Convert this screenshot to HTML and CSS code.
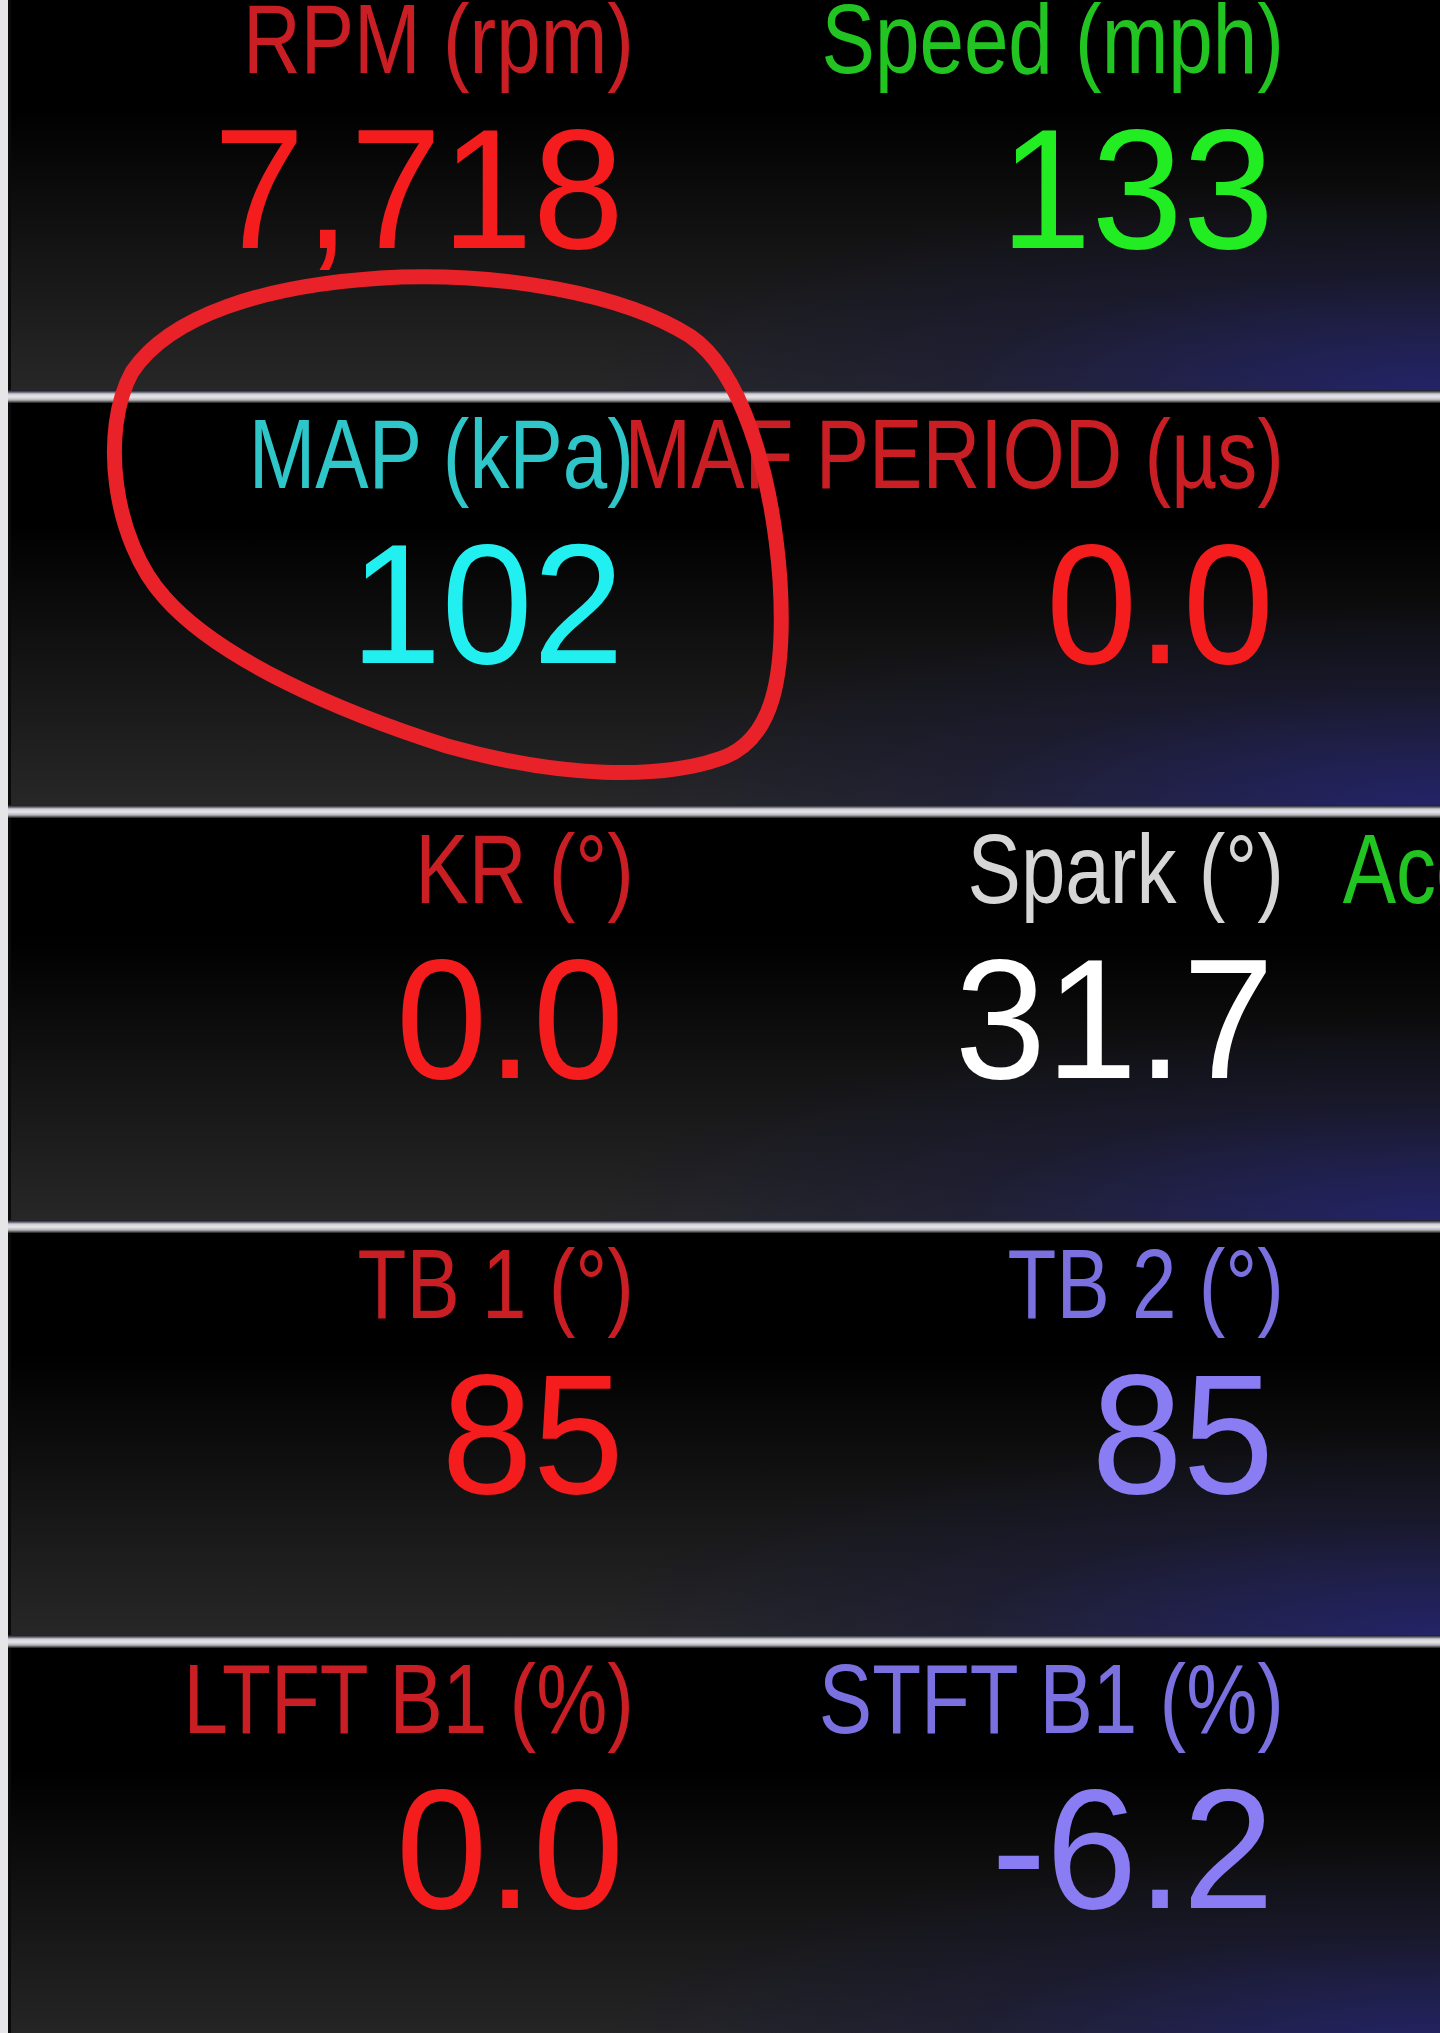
FILE: index.html
```html
<!DOCTYPE html>
<html lang="en">
<head>
  <meta charset="UTF-8" />
  <meta name="viewport" content="width=device-width, initial-scale=1.0"/>
  <title>Gauge Dashboard</title>
  <link rel="stylesheet" href="styles.css">
</head>
<body>

  <div class="screen">
    <!-- Row 1 -->
    <div class="row">
      <div class="cell red">
        <div class="label">RPM (rpm)</div>
        <div class="value">7,718</div>
      </div>
      <div class="cell green">
        <div class="label">Speed (mph)</div>
        <div class="value">133</div>
      </div>
      <div class="cell"></div>
    </div>
    <div class="sep"></div>

    <!-- Row 2 -->
    <div class="row">
      <div class="cell cyan">
        <div class="label">MAP (kPa)</div>
        <div class="value">102</div>
      </div>
      <div class="cell red">
        <div class="label">MAF PERIOD (µs)</div>
        <div class="value">0.0</div>
      </div>
      <div class="cell"></div>
    </div>
    <div class="sep"></div>

    <!-- Row 3 -->
    <div class="row">
      <div class="cell red">
        <div class="label">KR (°)</div>
        <div class="value">0.0</div>
      </div>
      <div class="cell white">
        <div class="label">Spark (°)</div>
        <div class="value">31.7</div>
      </div>
      <div class="cell green">
        <div class="label">Accel. Pedal (%)</div>
        <div class="value">100</div>
      </div>
    </div>
    <div class="sep"></div>

    <!-- Row 4 -->
    <div class="row">
      <div class="cell red">
        <div class="label">TB 1 (°)</div>
        <div class="value">85</div>
      </div>
      <div class="cell purple">
        <div class="label">TB 2 (°)</div>
        <div class="value">85</div>
      </div>
      <div class="cell"></div>
    </div>
    <div class="sep"></div>

    <!-- Row 5 -->
    <div class="row">
      <div class="cell red">
        <div class="label">LTFT B1 (%)</div>
        <div class="value">0.0</div>
      </div>
      <div class="cell purple">
        <div class="label">STFT B1 (%)</div>
        <div class="value">-6.2</div>
      </div>
      <div class="cell"></div>
    </div>
  </div>

  <!-- hand drawn circle around MAP -->
  <svg class="scribble" viewBox="0 0 1440 2033" width="1440" height="2033">
    <path d="M 401 277
             C 500 274, 620 292, 690 336
             C 740 370, 772 470, 780 580
             C 786 680, 772 740, 722 758
             C 660 780, 560 778, 447 746
             C 340 712, 220 660, 165 598
             C 112 540, 100 430, 132 372
             C 168 318, 260 283, 401 277 Z"
          fill="none" stroke="#e82228" stroke-width="15" stroke-linejoin="round" stroke-linecap="round"/>
  </svg>

</body>
</html>
```

FILE: styles.css
```css
body {
  margin: 0;
  padding: 0;
  background: #000;
  font-family: "Liberation Sans", Arial, sans-serif;
  overflow: hidden;
  position: relative;
  height: 2033px;
}

.screen {
  margin-top: -12px;
  border-left: 8px solid #e6e6e8;
  filter: blur(0.6px);
}

.row {
  display: grid;
  grid-template-columns: repeat(3, 650px);
  height: 402px;
  box-sizing: border-box;
  padding-top: 18px;
  border-left: 3px solid #0a0a0a;
  background-color: #000;
  background-image:
    radial-gradient(75% 65% at 100% 100%, rgba(34, 34, 120, 0.8) 0%, rgba(24, 24, 70, 0.4) 45%, rgba(0, 0, 0, 0) 80%),
    linear-gradient(to bottom, #000 30%, #141414 65%, #272727 100%);
}

.sep {
  height: 13px;
  background: linear-gradient(to bottom, #101020 0, #5a5a64 2px, #cfcfd6 4px, #e6e6ea 7px, #b4b4ba 10px, #1a1a1a 13px);
}

.cell {
  display: flex;
  flex-direction: column;
  align-items: flex-end;
  padding-right: 27px;
  white-space: nowrap;
}

.label {
  font-size: 80px;
  line-height: 80px;
  height: 80px;
  transform: scaleY(1.22);
  transform-origin: 50% 85%;
}

.value {
  font-size: 164px;
  line-height: 164px;
  height: 164px;
  margin-top: 24px;
  margin-right: 10px;
  transform: scaleY(1.04);
  transform-origin: 50% 85%;
}

.red .label { color: #c81e24; }
.red .value { color: #f41c1c; }

.green .label { color: #22c422; }
.green .value { color: #22ec22; }

.cyan .label { color: #2ec6c8; }
.cyan .value { color: #22f0f0; }

.white .label { color: #d6d6d6; }
.white .value { color: #ffffff; }

.purple .label { color: #7a70e0; }
.purple .value { color: #8a7cf2; }

.scribble {
  position: absolute;
  top: 0;
  left: 0;
  pointer-events: none;
}
```
